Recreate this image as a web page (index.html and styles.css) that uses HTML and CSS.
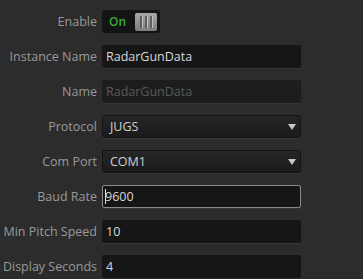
FILE: index.html
```html
<!DOCTYPE html>
<html>
<head>
    <title>Radar Gun Settings</title>
    <link rel="stylesheet" href="styles.css">
</head>
<body>
    <div class="form">
        <div class="label">Enable</div>
        <div class="toggle">
            <span class="toggle-text">On</span>
            <span class="knob"><i></i><i></i><i></i></span>
        </div>

        <div class="label">Instance Name</div>
        <div class="field">RadarGunData</div>

        <div class="label">Name</div>
        <div class="field disabled">RadarGunData</div>

        <div class="label">Protocol</div>
        <div class="select">JUGS<span class="arrow"></span></div>

        <div class="label">Com Port</div>
        <div class="select">COM1<span class="arrow"></span></div>

        <div class="label">Baud Rate</div>
        <div class="field focused"><span class="caret"></span>9600</div>

        <div class="label">Min Pitch Speed</div>
        <div class="field">10</div>

        <div class="label">Display Seconds</div>
        <div class="field">4</div>
    </div>
</body>
</html>
```

FILE: styles.css
```css
body {
    margin: 0;
    background-color: #2c2c2c;
    font-family: "Open Sans", sans-serif;
    font-size: 12.5px;
}

.form {
    display: grid;
    grid-template-columns: 97px 199px;
    column-gap: 5px;
    row-gap: 12px;
    padding-top: 10px;
}

.label {
    color: #999999;
    text-align: right;
    align-self: center;
    white-space: nowrap;
}

.toggle {
    width: 58px;
    height: 23px;
    box-sizing: border-box;
    background-color: #141414;
    border-radius: 3px;
    display: flex;
    align-items: center;
    justify-content: space-between;
    padding: 0 3px 0 7px;
}

.toggle-text {
    color: #33b033;
    font-size: 12px;
    font-weight: 600;
}

.knob {
    width: 22px;
    height: 18px;
    border-radius: 2px;
    background: linear-gradient(to bottom, #a8a8a8, #7c7c7c);
    display: flex;
    justify-content: center;
    align-items: center;
    gap: 2px;
}

.knob i {
    width: 2px;
    height: 12px;
    background-color: #5e5e5e;
    border-right: 1px solid #c0c0c0;
}

.field {
    height: 23px;
    box-sizing: border-box;
    background-color: #161616;
    border-radius: 2px;
    color: #d8d8d8;
    padding: 0 4px;
    display: flex;
    align-items: center;
    box-shadow: 0 1px 0 rgba(255, 255, 255, 0.05);
}

.field.disabled {
    background-color: #1d1d1d;
    color: #595959;
}

.field.focused {
    border: 1px solid #8a8a8a;
    padding-left: 2px;
}

.caret {
    width: 1px;
    height: 15px;
    background-color: #e0e0e0;
    margin-right: -1px;
}

.select {
    height: 23px;
    box-sizing: border-box;
    background: linear-gradient(to bottom, #262626, #1b1b1b);
    border: 1px solid #121212;
    border-radius: 3px;
    color: #d0d0d0;
    padding: 0 7px;
    display: flex;
    align-items: center;
    justify-content: space-between;
    box-shadow: 0 1px 0 rgba(255, 255, 255, 0.06);
}

.arrow {
    width: 0;
    height: 0;
    border-left: 4px solid transparent;
    border-right: 4px solid transparent;
    border-top: 6px solid #c8c8c8;
    margin-right: -3px;
}
```
